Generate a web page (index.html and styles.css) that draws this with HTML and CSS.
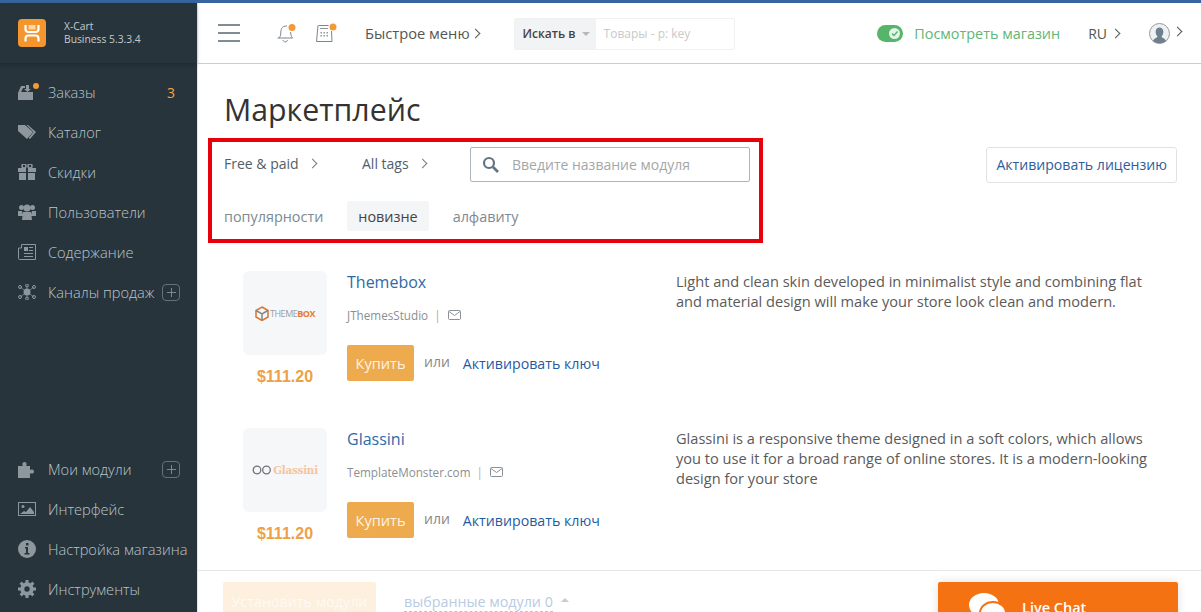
FILE: index.html
```html
<!DOCTYPE html>
<html lang="en">

<head>
    <meta charset="UTF-8">
    <title>Маркетплейс</title>
    <link rel="stylesheet" href="styles.css">
</head>

<body>
    <div class="topline"></div>
    <div class="layout">
        <aside class="sidebar">
            <div class="brand">
                <svg class="brand-logo" width="28" height="28" viewBox="0 0 28 28">
                    <rect width="28" height="28" rx="4" fill="#f3962d"/>
                    <path d="M10.500 6h7v4.500h-7z" fill="#fbd6a6"/>
                    <path d="M7.500 6v4c0 2 1 3 3 3h7c2 0 3-1 3-3V6M7.500 22.500v-3c0-2 1-3 3-3h7c2 0 3 1 3 3v3" fill="none" stroke="#fff" stroke-width="2.200"/>
                </svg>
                <div class="brand-text">X-Cart<br>Business 5.3.3.4</div>
            </div>
            <ul class="menu">
                <li>
                    <span class="menu-icon dotted">
                        <svg width="18" height="16" viewBox="0 0 18 16"><path d="M0 9l3-7h4v2H5L3 8h12v8H0z M8 1h3v4h2l-3.500 3L6 5h2z" fill="#8d979d"/></svg>
                    </span>
                    <span class="menu-label">Заказы</span><b class="menu-count">3</b>
                </li>
                <li>
                    <span class="menu-icon"><svg width="18" height="14" viewBox="0 0 18 14"><path d="M0 0h7l8 7-6 7-9-8z" fill="#8d979d"/><path d="M10 0l8 7-6 7-1.500-1 5-6-7-7z" fill="#8d979d"/></svg></span>
                    <span class="menu-label">Каталог</span>
                </li>
                <li>
                    <span class="menu-icon"><svg width="18" height="16" viewBox="0 0 18 16"><path d="M0 4h8v4H0zM10 4h8v4h-8zM1 9h7v7H1zM10 9h7v7h-7z" fill="#8d979d"/><circle cx="6" cy="2" r="2" fill="none" stroke="#8d979d" stroke-width="1.500"/><circle cx="12" cy="2" r="2" fill="none" stroke="#8d979d" stroke-width="1.500"/></svg></span>
                    <span class="menu-label">Скидки</span>
                </li>
                <li>
                    <span class="menu-icon"><svg width="18" height="16" viewBox="0 0 18 16"><circle cx="3.500" cy="3.500" r="2.500" fill="#8d979d"/><circle cx="14.500" cy="3.500" r="2.500" fill="#8d979d"/><circle cx="9" cy="4" r="3.500" fill="#8d979d"/><path d="M0 7h4l1 5H0zM14 7h4v5h-5zM5 8h8l1 8H4z" fill="#8d979d"/></svg></span>
                    <span class="menu-label">Пользователи</span>
                </li>
                <li>
                    <span class="menu-icon"><svg width="18" height="16" viewBox="0 0 18 16"><path d="M3.500.5h14v15H1.500a1 1 0 0 1-1-1V4h3z" fill="none" stroke="#8d979d"/><path d="M6 3h4v4H6zM11 3h4v1h-4zM11 6h4v1h-4zM6 9h9v1H6zM6 12h9v1H6z" fill="#8d979d"/></svg></span>
                    <span class="menu-label">Содержание</span>
                </li>
                <li>
                    <span class="menu-icon"><svg width="18" height="16" viewBox="0 0 18 16"><path d="M2 3l14 10M16 3L2 13M9 1v14" stroke="#7d878d" stroke-width=".8"/><circle cx="9" cy="8" r="3.500" fill="#8d979d"/><circle cx="2" cy="3" r="1.500" fill="none" stroke="#8d979d"/><circle cx="16" cy="3" r="1.500" fill="none" stroke="#8d979d"/><circle cx="2" cy="13" r="1.500" fill="none" stroke="#8d979d"/><circle cx="16" cy="13" r="1.500" fill="none" stroke="#8d979d"/><circle cx="9" cy="1.500" r="1.500" fill="none" stroke="#8d979d"/><circle cx="9" cy="14.500" r="1.500" fill="none" stroke="#8d979d"/></svg></span>
                    <span class="menu-label">Каналы продаж</span><span class="menu-plus"></span>
                </li>
            </ul>
            <ul class="menu menu-bottom">
                <li>
                    <span class="menu-icon"><svg width="18" height="17" viewBox="0 0 18 17"><path d="M0 5h5c-1-1-1-4 1.500-4S9 4 8 5h4v4c1-1 4-1 4 1.500S13 13 12 12v5H0z" fill="#8d979d"/></svg></span>
                    <span class="menu-label">Мои модули</span><span class="menu-plus"></span>
                </li>
                <li>
                    <span class="menu-icon"><svg width="18" height="14" viewBox="0 0 18 14"><rect x=".5" y=".5" width="17" height="13" fill="none" stroke="#8d979d"/><circle cx="5" cy="4.500" r="1.500" fill="#8d979d"/><path d="M2 12l4-3 2 1 4-5 4 5v2z" fill="#8d979d"/></svg></span>
                    <span class="menu-label">Интерфейс</span>
                </li>
                <li>
                    <span class="menu-icon"><svg width="18" height="18" viewBox="0 0 18 18"><circle cx="9" cy="9" r="9" fill="#8d979d"/><path d="M7 7h3v6h1.500v1.500h-5V13H8V8.500H7z M8 3h2.500v2.500H8z" fill="#27343c"/></svg></span>
                    <span class="menu-label">Настройка магазина</span>
                </li>
                <li>
                    <span class="menu-icon"><svg width="18" height="18" viewBox="0 0 18 18"><circle cx="9" cy="9" r="4.700" fill="none" stroke="#8d979d" stroke-width="4"/><path d="M9 0v18M0 9h18M2.600 2.600l12.800 12.800M15.400 2.600L2.600 15.400" stroke="#8d979d" stroke-width="3" stroke-dasharray="3.500 11 3.500"/></svg></span>
                    <span class="menu-label">Инструменты</span>
                </li>
            </ul>
        </aside>

        <div class="main">
            <header class="topbar">
                <div class="burger"><span></span><span></span><span></span></div>
                <span class="top-icon bell">
                    <svg width="22" height="22" viewBox="0 0 22 22"><path d="M4 16c2-2 1.500-4 2-7.500S9 4 12 4M15.500 10c.5 3 .5 4 2 6H2.500M8 18c.5 2.500 4 2.500 4.500 0" fill="none" stroke="#7b868d"/><circle cx="17" cy="5.500" r="3.500" fill="#f39a34"/></svg>
                </span>
                <span class="top-icon calc">
                    <svg width="22" height="22" viewBox="0 0 22 22"><path d="M3.500 3.500h10M16.500 9l.5 10.500H1.500L3 3.500" fill="none" stroke="#7b868d"/><path d="M5 6h8v1H5zM5.500 10H7v1.500H5.500zM8.500 10H10v1.500H8.500zM11.500 10H13v1.500h-1.500zM5.500 13H7v1.500H5.500zM8.500 13H10v1.500H8.500zM11.500 13H13v1.500h-1.500z" fill="#8d979d"/><circle cx="18" cy="5" r="3.500" fill="#f39a34"/></svg>
                </span>
                <span class="quick-menu">Быстрое меню<i class="chevron"></i></span>
                <div class="quick-search">
                    <span class="search-type">Искать в<i class="caret"></i></span>
                    <span class="search-hint">Товары - p: key</span>
                </div>
                <div class="top-right">
                    <span class="toggle">
                        <span class="toggle-knob">
                            <svg width="11" height="11" viewBox="0 0 11 11"><path d="M3 5.500l2 2 3.500-4" fill="none" stroke="#55b56a" stroke-width="1.400"/></svg>
                        </span>
                    </span>
                    <span class="store-link">Посмотреть магазин</span>
                    <span class="lang">RU<i class="chevron"></i></span>
                    <span class="user">
                        <svg width="21" height="21" viewBox="0 0 21 21"><circle cx="10.500" cy="10.500" r="10" fill="#eef1f3" stroke="#8e9aa3"/><path d="M4 18c1-3 4-3 4.500-4.500C7 12 6.500 10 6.700 8c.3-2.500 2-3.500 3.800-3.500s3.500 1 3.800 3.500c.2 2-.3 4-1.800 5.500C13 15 16 15 17 18c-3.500 3-9.500 3-13 0z" fill="#6f7f8b"/></svg>
                        <i class="chevron"></i>
                    </span>
                </div>
            </header>

            <div class="content">
                <h1 class="page-title">Маркетплейс</h1>
                <div class="toolbar">
                    <div class="filter-box">
                        <div class="filter-row">
                            <span class="filter-link filter-paid">Free &amp; paid<i class="chevron"></i></span>
                            <span class="filter-link filter-tags">All tags<i class="chevron"></i></span>
                            <div class="module-search">
                                <svg width="17" height="17" viewBox="0 0 17 17"><circle cx="7" cy="7" r="5" fill="none" stroke="#5f7581" stroke-width="2.200"/><path d="M11 11l5 5" stroke="#5f7581" stroke-width="2.600"/></svg>
                                <span>Введите название модуля</span>
                            </div>
                        </div>
                        <div class="sort-row">
                            <span class="sort-item">популярности</span>
                            <span class="sort-item active">новизне</span>
                            <span class="sort-item">алфавиту</span>
                        </div>
                    </div>
                    <a class="license-btn" href="#">Активировать лицензию</a>
                </div>

                <div class="module">
                    <div class="module-side">
                        <div class="module-logo">
                            <svg width="14" height="15" viewBox="0 0 14 15"><path d="M7 1l6 3.500v6.500l-6 3.500L1 11V4.500z" fill="none" stroke="#d9762f" stroke-width="1.500"/><path d="M1 4.500L7 8l6-3.500M7 8v6" fill="none" stroke="#80868a" stroke-width="1.500"/></svg>
                            <span class="logo-theme">THEME<b>BOX</b></span>
                        </div>
                        <div class="module-price">$111.20</div>
                    </div>
                    <div class="module-info">
                        <a class="module-name" href="#">Themebox</a>
                        <div class="module-author">JThemesStudio<span class="sep">|</span>
                            <svg width="13" height="10" viewBox="0 0 13 10"><rect x=".5" y=".5" width="12" height="9" rx="1" fill="none" stroke="#8a9298"/><path d="M1 1.500l5.500 4 5.500-4" fill="none" stroke="#8a9298"/></svg>
                        </div>
                        <div class="module-actions">
                            <span class="buy-btn">Купить</span><span class="or">или</span><a class="activate" href="#">Активировать ключ</a>
                        </div>
                    </div>
                    <p class="module-desc">Light and clean skin developed in minimalist style and combining flat and material design will make your store look clean and modern.</p>
                </div>

                <div class="module">
                    <div class="module-side">
                        <div class="module-logo">
                            <svg width="20" height="10" viewBox="0 0 20 10"><circle cx="5" cy="5" r="3.800" fill="none" stroke="#6f7478" stroke-width="1.300"/><circle cx="14.500" cy="5" r="3.800" fill="none" stroke="#6f7478" stroke-width="1.300"/></svg>
                            <span class="logo-glass">Glassini</span>
                        </div>
                        <div class="module-price">$111.20</div>
                    </div>
                    <div class="module-info">
                        <a class="module-name" href="#">Glassini</a>
                        <div class="module-author">TemplateMonster.com<span class="sep">|</span>
                            <svg width="13" height="10" viewBox="0 0 13 10"><rect x=".5" y=".5" width="12" height="9" rx="1" fill="none" stroke="#8a9298"/><path d="M1 1.500l5.500 4 5.500-4" fill="none" stroke="#8a9298"/></svg>
                        </div>
                        <div class="module-actions">
                            <span class="buy-btn">Купить</span><span class="or">или</span><a class="activate" href="#">Активировать ключ</a>
                        </div>
                    </div>
                    <p class="module-desc">Glassini is a responsive theme designed in a soft colors, which allows you to use it for a broad range of online stores. It is a modern-looking design for your store</p>
                </div>
            </div>

            <footer class="bottombar">
                <span class="install-btn">Установить модули</span>
                <span class="selected">выбранные модули 0</span><i class="caret-up"></i>
            </footer>
        </div>
    </div>

    <div class="livechat">
        <svg width="37" height="30" viewBox="0 0 37 30"><ellipse cx="15" cy="12" rx="15" ry="12" fill="#fff"/><ellipse cx="24" cy="20" rx="13" ry="11" fill="#fff" stroke="#f57212" stroke-width="2"/></svg>
        <span>Live Chat</span>
    </div>
</body>

</html>
```

FILE: styles.css
```css
html,
body {
    height: 100%;
    margin: 0;
    padding: 0;
    overflow: hidden;
    font-family: "Open Sans", sans-serif;
    color: #333;
    background: #fff;
}

a {
    text-decoration: none;
}

ul {
    list-style: none;
    margin: 0;
    padding: 0;
}

.topline {
    height: 3px;
    background-color: #36659f;
}

.layout {
    display: flex;
    height: 609px;
}

/* sidebar */
.sidebar {
    width: 198px;
    flex: none;
    box-sizing: border-box;
    background-color: #27343c;
    display: flex;
    flex-direction: column;
    border-right: 1px solid #e3e5e6;
}

.brand {
    height: 60px;
    flex: none;
    display: flex;
    align-items: center;
    padding-left: 18px;
    box-shadow: 0 2px 4px rgba(0, 0, 0, 0.2);
    box-sizing: border-box;
    margin-bottom: 9px;
}

.brand-logo {
    flex: none;
}

.brand-text {
    margin-left: 18px;
    font-size: 10.300px;
    line-height: 13.500px;
    color: #c4cbcf;
}

.menu-bottom {
    margin-top: auto;
    padding-bottom: 3px;
}

.menu li {
    height: 40px;
    display: flex;
    align-items: center;
    padding-left: 18px;
    position: relative;
    font-size: 14.600px;
    font-weight: 300;
    color: #bcc4c9;
    white-space: nowrap;
}

.menu-icon {
    width: 18px;
    height: 18px;
    display: flex;
    align-items: center;
    margin-right: 12px;
    position: relative;
}

.menu-icon.dotted::after {
    content: "";
    position: absolute;
    right: -3px;
    top: 0;
    width: 6px;
    height: 6px;
    border-radius: 50%;
    background-color: #f39a34;
}

.menu-count {
    position: absolute;
    left: 167px;
    font-size: 14px;
    color: #f3a33f;
}

.menu-plus {
    position: absolute;
    left: 162px;
    width: 18px;
    height: 17px;
    border: 1px solid #66727a;
    border-radius: 4px;
    box-sizing: border-box;
    background: linear-gradient(#7d878d, #7d878d) center / 9px 1px no-repeat,
        linear-gradient(#7d878d, #7d878d) center / 1px 9px no-repeat;
}

/* main column */
.main {
    flex: 1;
    min-width: 0;
    display: flex;
    flex-direction: column;
}

.topbar {
    height: 61px;
    flex: none;
    box-sizing: border-box;
    display: flex;
    align-items: center;
    border-bottom: 1px solid #ccc;
    padding-left: 20px;
}

.burger {
    width: 22px;
    margin-right: 35px;
}

.burger span {
    display: block;
    height: 2px;
    background-color: #7f8d96;
    margin: 6px 0;
}

.top-icon {
    width: 22px;
    height: 22px;
}

.bell {
    margin-right: 18px;
}

.calc {
    margin-right: 28px;
}

.chevron {
    display: inline-block;
    width: 6px;
    height: 6px;
    border-top: 1px solid #555;
    border-right: 1px solid #555;
    transform: rotate(45deg);
    margin-left: 2px;
    position: relative;
    top: -2px;
}

.quick-menu {
    font-size: 14.700px;
    color: #555;
    margin-right: 35px;
    white-space: nowrap;
}

.quick-search {
    display: flex;
    width: 221px;
    height: 32px;
    margin-top: 1px;
    border: 1px solid #f0f1f2;
    border-radius: 2px;
    box-sizing: border-box;
    align-items: center;
}

.search-type {
    width: 81px;
    height: 100%;
    background-color: #f2f3f4;
    font-size: 12px;
    font-weight: 600;
    color: #444;
    display: flex;
    align-items: center;
    padding-left: 8px;
    box-sizing: border-box;
}

.caret {
    border: 4px solid transparent;
    border-top-color: #b5b8ba;
    margin: 4px 0 0 6px;
}

.search-hint {
    font-size: 12px;
    color: #c8c9ca;
    margin-left: 8px;
}

.top-right {
    margin-left: auto;
    display: flex;
    align-items: center;
    padding-right: 20px;
}

.toggle {
    width: 26px;
    height: 17px;
    border-radius: 9px;
    background-color: #55b56a;
    position: relative;
    margin-right: 11px;
}

.toggle-knob {
    position: absolute;
    right: 3px;
    top: 3px;
    width: 11px;
    height: 11px;
    border-radius: 50%;
    background-color: #e4f4e8;
    display: flex;
}

.store-link {
    font-size: 14.400px;
    color: #5fb676;
    margin-right: 28px;
    white-space: nowrap;
}

.lang {
    font-size: 14px;
    color: #555;
    margin-right: 30px;
}

.lang .chevron {
    margin-left: 5px;
}

.user {
    display: flex;
    align-items: center;
}

.user .chevron {
    margin-left: 4px;
}

/* content */
.content {
    flex: 1;
    overflow: hidden;
    padding-left: 10px;
}

.page-title {
    font-size: 30.300px;
    font-weight: 400;
    line-height: 40px;
    margin: 26px 0 8px 16px;
    color: #333;
}

.toolbar {
    display: flex;
    align-items: flex-start;
    justify-content: space-between;
    padding-right: 24px;
    margin-bottom: 28px;
}

.filter-box {
    width: 555px;
    height: 105px;
    box-sizing: border-box;
    border: 4px solid #e8000b;
    padding: 4px 9px 0 12px;
}

.filter-row {
    display: flex;
    align-items: center;
    height: 36px;
}

.filter-link {
    font-size: 14px;
    color: #50606a;
    margin-top: -2px;
}

.filter-link .chevron {
    margin-left: 10px;
    border-color: #6f7c84;
}

.filter-paid {
    width: 138px;
}

.filter-tags {
    width: 108px;
}

.module-search {
    flex: 1;
    height: 35px;
    box-sizing: border-box;
    border: 1px solid #a9b6bd;
    border-radius: 2px;
    display: flex;
    align-items: center;
    padding-left: 11px;
    font-size: 14px;
    color: #a4a7a9;
}

.module-search span {
    margin-left: 13px;
}

.sort-row {
    display: flex;
    margin-top: 19px;
    font-size: 14.400px;
    line-height: 20px;
    color: #7c8a92;
}

.sort-item {
    padding: 6px 11px 4px;
    border-radius: 2px;
    margin-right: 13px;
}

.sort-item:first-child {
    padding-left: 0;
}

.sort-item.active {
    background-color: #f4f5f6;
    color: #444;
}

.license-btn {
    margin-top: 9px;
    height: 36px;
    box-sizing: border-box;
    line-height: 34px;
    padding: 0 9px;
    font-size: 14.100px;
    color: #2f5e9b;
    border: 1px solid #dfe3e6;
    border-radius: 3px;
    white-space: nowrap;
}

.module {
    display: flex;
    height: 157px;
    padding-left: 35px;
    padding-right: 40px;
}

.module-side {
    width: 84px;
    margin-right: 20px;
    flex: none;
}

.module-logo {
    height: 84px;
    background-color: #f6f7f9;
    border-radius: 6px;
    display: flex;
    align-items: center;
    justify-content: center;
    gap: 1px;
}

.logo-theme {
    font-size: 9px;
    letter-spacing: -0.5px;
    color: #9a9da0;
}

.logo-theme b {
    color: #e87a2e;
}

.logo-glass {
    font-family: "DejaVu Serif", serif;
    font-size: 10.300px;
    font-weight: 700;
    color: #f5c49c;
    letter-spacing: -0.2px;
}

.module-price {
    margin-top: 13px;
    text-align: center;
    font-family: "Liberation Sans", sans-serif;
    font-size: 16px;
    font-weight: 700;
    color: #eea045;
}

.module-info {
    width: 329px;
    flex: none;
}

.module-name {
    display: block;
    font-size: 16px;
    line-height: 22px;
    color: #2e6aa8;
}

.module-author {
    margin-top: 13px;
    font-size: 11.700px;
    line-height: 18px;
    color: #8c8f92;
    display: flex;
    align-items: center;
}

.sep {
    margin: 0 7px 0 6px;
    color: #aaa;
}

.module-actions {
    display: flex;
    align-items: center;
    margin-top: 21px;
}

.buy-btn {
    width: 67px;
    height: 36px;
    line-height: 36px;
    text-align: center;
    background-color: #eeab4e;
    border-radius: 2px;
    color: #fdf3e4;
    font-size: 14.600px;
}

.or {
    margin-left: 10px;
    font-size: 14px;
    color: #85888b;
    margin-top: -3px;
}

.activate {
    margin-left: 13px;
    font-size: 14.200px;
    color: #1f5ba3;
    white-space: nowrap;
}

.module-desc {
    margin: 0;
    flex: 1;
    font-size: 14.600px;
    line-height: 20px;
    color: #5a5a5a;
}

/* bottom bar */
.bottombar {
    height: 42px;
    flex: none;
    box-sizing: border-box;
    border-top: 1px solid #e4e6e8;
    padding: 11px 0 0 25px;
    display: flex;
    align-items: flex-start;
    overflow: hidden;
}

.install-btn {
    width: 153px;
    height: 40px;
    line-height: 40px;
    text-align: center;
    background-color: #fdf0de;
    border-radius: 2px;
    color: #fffaf3;
    font-size: 14.300px;
}

.selected {
    margin-left: 28px;
    margin-top: 10px;
    font-size: 14.300px;
    line-height: 19px;
    color: #b8cbe3;
    border-bottom: 1px dashed #b8c4d2;
}

.caret-up {
    border: 4px solid transparent;
    border-bottom-color: #c4ccd3;
    margin: 12px 0 0 8px;
}

/* chat widget sits over the page corner */
.livechat {
    position: absolute;
    left: 938px;
    top: 582px;
    width: 240px;
    height: 50px;
    background-color: #f57212;
    border-radius: 2px;
    box-shadow: 0 0 10px rgba(0, 0, 0, 0.12);
    display: flex;
    padding: 11px 0 0 31px;
    box-sizing: border-box;
    color: #fff;
    font-size: 14.500px;
    font-weight: 600;
}

.livechat span {
    margin-left: 16px;
    margin-top: 5px;
}
```
